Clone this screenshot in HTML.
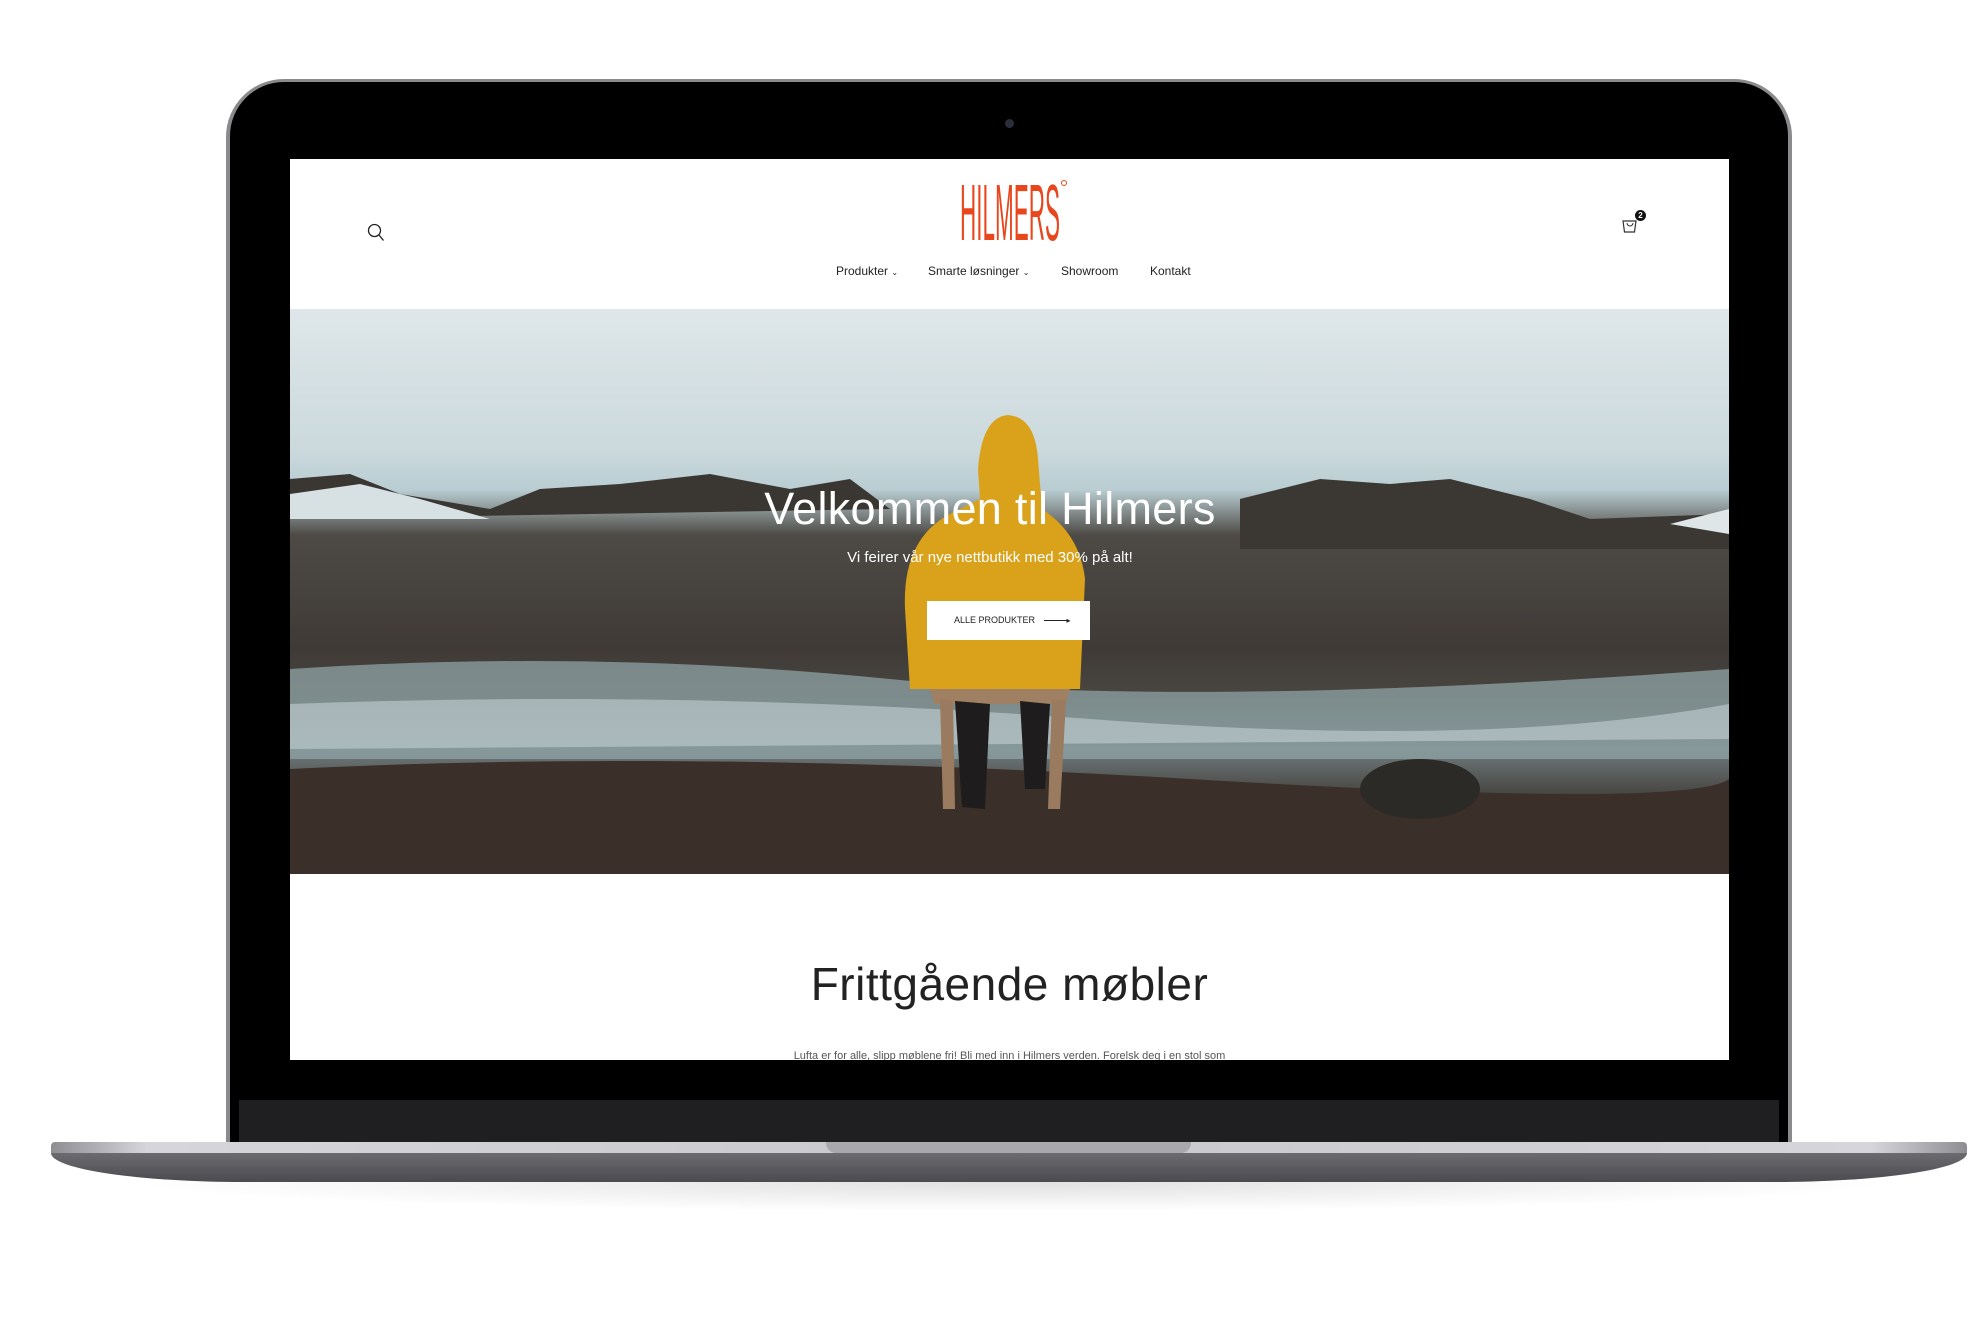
<!DOCTYPE html>
<html><head><meta charset="utf-8"><style>
*{margin:0;padding:0;box-sizing:border-box}
body{width:1983px;height:1337px;background:#fff;position:relative;overflow:hidden;font-family:"Liberation Sans",sans-serif}
.abs{position:absolute}
</style></head><body>
<!-- lid -->
<div class="abs" style="left:226px;top:79px;width:1566px;height:1070px;border-radius:58px 58px 0 0;background:#8a8a8d"></div>
<div class="abs" style="left:230px;top:82px;width:1558px;height:1064px;border-radius:54px 54px 0 0;background:#000"></div>
<div class="abs" style="left:1005px;top:119px;width:9px;height:9px;border-radius:50%;background:#2a2f3a"></div>
<div class="abs" style="left:239px;top:1100px;width:1540px;height:42px;background:#1f1f22"></div>
<!-- screen -->
<div class="abs" style="left:290px;top:159px;width:1439px;height:901px;background:#fff;overflow:hidden">
  <svg class="abs" style="left:77px;top:64px" width="18" height="19" viewBox="0 0 18 19"><circle cx="7.5" cy="7.5" r="6" fill="none" stroke="#222" stroke-width="1.3"/><line x1="12" y1="12" x2="16.5" y2="17.5" stroke="#222" stroke-width="1.3"/></svg>
  <svg class="abs" style="left:668px;top:20px" width="112" height="64" viewBox="0 0 112 64"><text x="2" y="61" font-family="Liberation Sans Narrow, Liberation Sans, sans-serif" font-size="80" textLength="100" lengthAdjust="spacingAndGlyphs" fill="#e8471d">HILMERS</text><circle cx="106" cy="4" r="2.5" fill="none" stroke="#e8471d" stroke-width="1"/></svg>
  <svg class="abs" style="left:1330px;top:56px" width="20" height="19" viewBox="0 0 20 19"><path d="M3 6h13l-1.5 11h-10z" fill="none" stroke="#333" stroke-width="1.2"/><path d="M7 8a3 3 0 0 0 6 0" fill="none" stroke="#333" stroke-width="1"/></svg>
  <div class="abs" style="left:1345px;top:51px;width:11px;height:11px;border-radius:50%;background:#111;color:#fff;font-size:8px;line-height:11px;text-align:center;font-weight:bold">2</div>
  <div class="abs" style="left:0;top:105px;width:1439px;font-size:12px;color:#222">
    <span class="abs" style="left:546px">Produkter <span style="font-size:8px">⌄</span></span>
    <span class="abs" style="left:638px">Smarte løsninger <span style="font-size:8px">⌄</span></span>
    <span class="abs" style="left:771px">Showroom</span>
    <span class="abs" style="left:860px">Kontakt</span>
  </div>
  <!-- hero -->
  <div class="abs" style="left:0;top:150px;width:1439px;height:565px;overflow:hidden;background:linear-gradient(180deg,#dfe7ea 0%,#cbd9dd 25%,#b9cdd2 32%,#4d4a45 40%,#3f3a35 60%,#4b4843 70%,#6f7a7c 78%,#3c3833 88%,#332c27 100%)">
    <svg class="abs" style="left:0;top:0" width="1439" height="565" viewBox="0 0 1439 565">
      <path d="M0 170 L60 165 L110 185 L200 200 L250 180 L330 175 L420 165 L500 180 L560 170 L600 200 L0 210Z" fill="#3a3733"/>
      <path d="M0 185 L70 175 L130 190 L200 210 L0 210Z" fill="#d7e0e2"/>
      <path d="M950 190 L1030 170 L1100 175 L1160 170 L1240 190 L1300 210 L1439 205 L1439 240 L950 240Z" fill="#3b3834"/>
      <path d="M1380 215 L1439 200 L1439 225Z" fill="#dfe6e8"/>
      <path d="M0 360 Q300 340 600 370 T1439 360 L1439 450 L0 450Z" fill="#8fa3a6" opacity=".75"/>
      <path d="M0 395 Q400 380 800 410 T1439 395 L1439 430 L0 440Z" fill="#c3d1d3" opacity=".6"/>
      <path d="M0 460 Q400 440 900 470 T1439 470 L1439 565 L0 565Z" fill="#3a2f29"/>
      <ellipse cx="1130" cy="480" rx="60" ry="30" fill="#2c2a27"/>
      <!-- figure -->
      <path d="M688 160 Q692 108 718 106 Q745 108 748 150 L752 200 Q790 225 795 270 L790 380 L620 380 L615 300 Q612 230 660 205 L690 190Z" fill="#d9a21a"/>
      <path d="M640 380 L780 380 L776 395 L644 395Z" fill="#9f8062"/>
      <path d="M650 390 L663 392 L665 500 L653 500Z" fill="#9a7b60"/>
      <path d="M762 390 L776 392 L770 500 L758 500Z" fill="#9a7b60"/>
      <path d="M665 392 L700 395 L695 500 L672 498Z" fill="#1e1c1c"/>
      <path d="M730 392 L760 395 L755 480 L735 480Z" fill="#1e1c1c"/>
    </svg>
  </div>
  <div class="abs" style="left:0;top:322px;width:1400px;text-align:center;color:#fff;font-size:45px;line-height:56px;letter-spacing:.3px">Velkommen til Hilmers</div>
  <div class="abs" style="left:0;top:389px;width:1400px;text-align:center;color:#fff;font-size:15px;line-height:20px">Vi feirer vår nye nettbutikk med 30% på alt!</div>
  <div class="abs" style="left:637px;top:442px;width:163px;height:39px;background:#fff;font-size:9px;color:#222;line-height:39px;padding-left:27px">ALLE PRODUKTER <span style="display:inline-block;width:23px;height:1px;background:#222;vertical-align:middle;margin-left:6px"></span><span style="font-size:8px">▸</span></div>
  <div class="abs" style="left:0;top:797px;width:1439px;text-align:center;color:#222;font-size:46px;line-height:56px;letter-spacing:.5px">Frittgående møbler</div>
  <div class="abs" style="left:0;top:890px;width:1439px;text-align:center;color:#555;font-size:11px;line-height:14px">Lufta er for alle, slipp møblene fri! Bli med inn i Hilmers verden. Forelsk deg i en stol som</div>
</div>
<!-- base -->
<div class="abs" style="left:51px;top:1142px;width:1916px;height:11px;border-radius:4px 4px 0 0;background:linear-gradient(90deg,#8e8e92,#d6d6da 5%,#c8c8cc 50%,#d6d6da 95%,#8e8e92)"></div>
<div class="abs" style="left:826px;top:1142px;width:365px;height:11px;border-radius:0 0 10px 10px;background:#a9a9ad"></div>
<div class="abs" style="left:51px;top:1153px;width:1916px;height:29px;border-radius:0 0 200px 200px/0 0 30px 30px;background:linear-gradient(180deg,#6b6b70,#4a4a4f)"></div>
<div class="abs" style="left:120px;top:1182px;width:1780px;height:30px;background:radial-gradient(ellipse at top,rgba(0,0,0,.12),rgba(0,0,0,0) 70%)"></div>
</body></html>
